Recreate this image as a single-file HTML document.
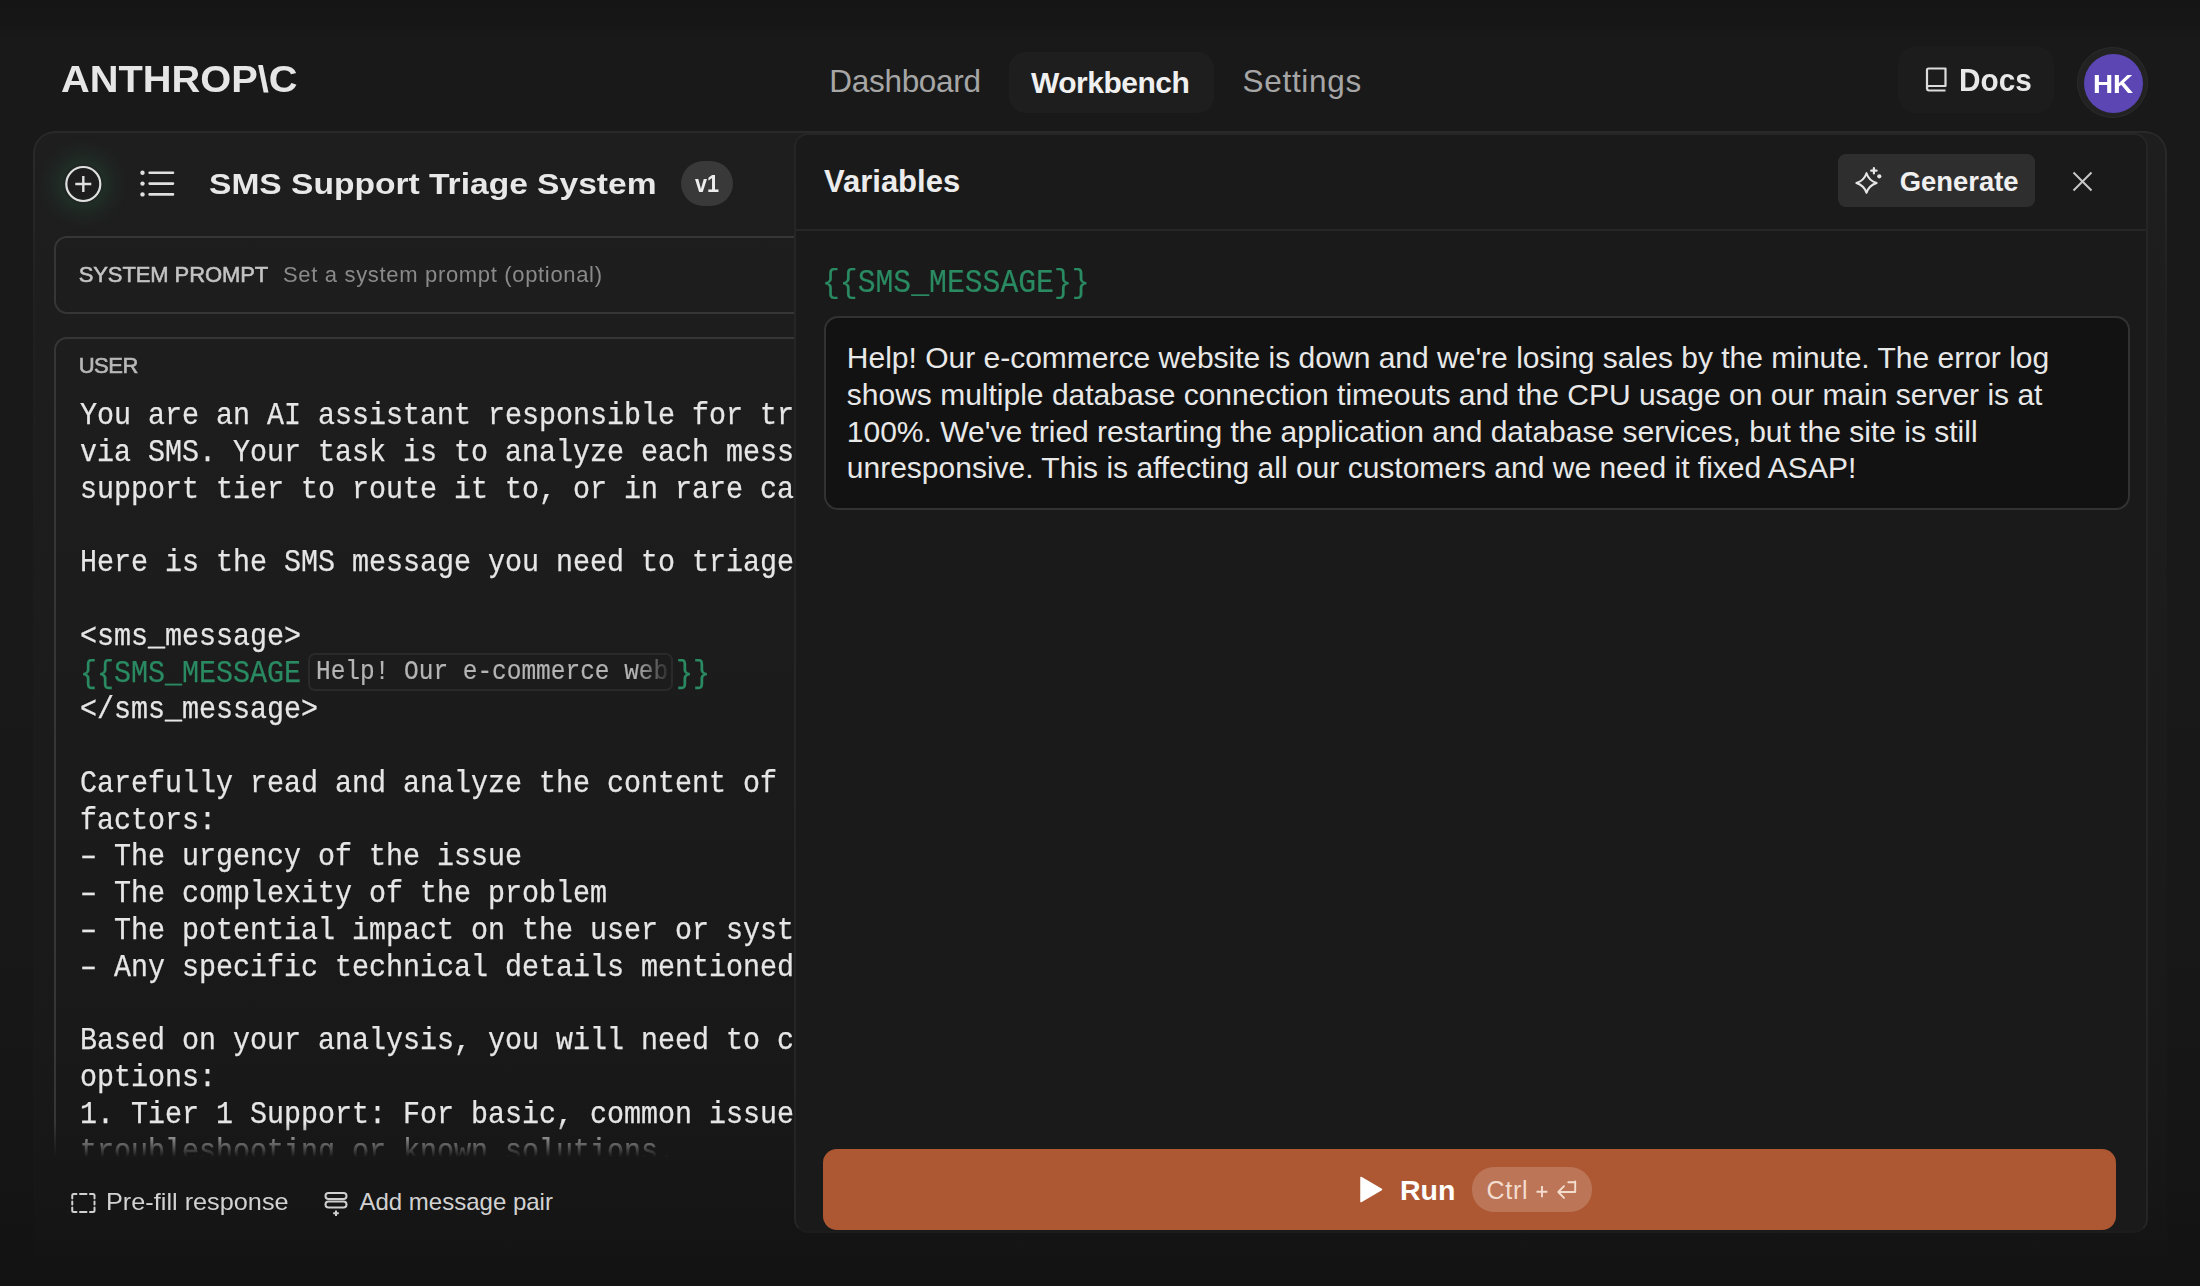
<!DOCTYPE html>
<html><head><meta charset="utf-8">
<style>
html,body{margin:0;padding:0;}
body{width:2200px;height:1286px;overflow:hidden;position:relative;background:#161616;font-family:"Liberation Sans",sans-serif;color:#ececec;}
.a{position:absolute;white-space:pre;line-height:1;}
.b{font-weight:bold;}
.mono{font-family:"Liberation Mono",monospace;}
#bg{position:absolute;left:0;top:0;width:2200px;height:1286px;background:#141414;}
#frame{position:absolute;left:0;top:0;width:2200px;height:1286px;background:linear-gradient(180deg,#151515 0,#161616 20px,#191919 40px,#191919 640px,#171717 1030px,#131313 1260px);}
#outer{position:absolute;left:33px;top:131px;width:2134px;height:1150px;border-radius:22px;background:linear-gradient(180deg,#1e1e1e 0px,#1c1c1c 500px,#191919 900px,rgba(24,24,24,0) 1150px);}
#outerb{position:absolute;left:33px;top:131px;width:2130px;height:1150px;border-radius:22px;border:2px solid #292929;border-bottom:none;-webkit-mask-image:linear-gradient(180deg,#000 0,#000 40px,rgba(0,0,0,0.3) 160px,rgba(0,0,0,0) 450px);}
#left{position:absolute;left:35px;top:133px;width:760px;height:1024px;overflow:hidden;-webkit-mask-image:linear-gradient(180deg,#000 0,#000 990px,rgba(0,0,0,0) 1024px);}
#left .box{position:absolute;border:2px solid #363636;border-radius:13px;}
#vars{position:absolute;left:794px;top:133px;width:1350px;height:1096px;border:2px solid #252525;border-bottom-color:#1c1c1c;border-radius:14px;background:#1a1a1a;}
</style></head>
<body>
<div id="bg"></div><div id="frame"></div>

<!-- top nav -->
<div class="a b" style="left:61px;top:62.2px;font-size:36px;color:#e6e6e6;transform:scaleX(1.105);transform-origin:0 0;">ANTHROP\C</div>

<div style="position:absolute;left:1009px;top:52px;width:205px;height:61px;border-radius:16px;background:#1e1e1e;"></div>
<div class="a" style="left:829.3px;top:66.2px;font-size:31.5px;letter-spacing:-0.3px;color:#a6a6a6;">Dashboard</div>
<div class="a b" style="left:1031px;top:67.9px;font-size:30px;letter-spacing:-0.5px;color:#f0f0f0;">Workbench</div>
<div class="a" style="left:1242.5px;top:66.2px;font-size:31.5px;letter-spacing:0.7px;color:#a6a6a6;">Settings</div>

<div style="position:absolute;left:1898px;top:46px;width:156px;height:67px;border-radius:18px;background:#1c1c1c;"></div>
<svg style="position:absolute;left:1924px;top:66px;" width="26" height="28" viewBox="0 0 26 28">
  <path d="M3 23 V4 Q3 2.5 4.5 2.5 H21.5 V20 H5 Q3 20 3 22 Q3 24.5 5 24.5 H21.5" fill="none" stroke="#dcdcdc" stroke-width="2.2" stroke-linejoin="round"/>
</svg>
<div class="a b" style="left:1959px;top:64.9px;font-size:31px;color:#e8e8e8;transform:scaleX(0.96);transform-origin:0 0;">Docs</div>

<div style="position:absolute;left:2077.4px;top:47.4px;width:71px;height:71px;border-radius:50%;background:#222222;box-shadow:inset 0 0 0 1px #2a2a2a;"></div>
<div style="position:absolute;left:2083.5px;top:53.7px;width:59px;height:59px;border-radius:50%;background:#5b46b4;"></div>
<div class="a b" style="left:2093.3px;top:71px;font-size:26.5px;color:#ffffff;transform:scaleX(1.05);transform-origin:0 0;">HK</div>

<!-- outer panel -->
<div id="outer"></div><div id="outerb"></div>

<!-- left column (clipped) -->
<div id="left">
 <div style="position:absolute;left:0;top:0;width:760px;height:1024px;">
  <div style="position:absolute;left:3.3px;top:6px;width:90px;height:90px;border-radius:50%;background:radial-gradient(circle closest-side,rgba(38,80,60,0) 30%,rgba(38,80,60,0.30) 48%,rgba(38,80,60,0.14) 70%,rgba(38,80,60,0) 100%);"></div>
  <svg style="position:absolute;left:28px;top:31px;" width="40" height="40" viewBox="0 0 40 40">
    <circle cx="20.3" cy="20" r="17" fill="none" stroke="#e0e0e0" stroke-width="2.2"/>
    <path d="M12.3 20 H28.3 M20.3 12 V28" stroke="#e0e0e0" stroke-width="2.4"/>
  </svg>
  <svg style="position:absolute;left:103px;top:33px;" width="40" height="36" viewBox="0 0 40 36">
    <circle cx="4.5" cy="6.7" r="2.2" fill="#e0e0e0"/>
    <circle cx="4.5" cy="17.6" r="2.2" fill="#e0e0e0"/>
    <circle cx="4.5" cy="28.4" r="2.2" fill="#e0e0e0"/>
    <path d="M11.6 6.7 H35 M11.6 17.6 H35 M11.6 28.4 H35" stroke="#e0e0e0" stroke-width="2.6" stroke-linecap="round"/>
  </svg>
  <div class="a b" style="left:173.5px;top:36.9px;font-size:29px;color:#e8e8e8;transform:scaleX(1.157);transform-origin:0 0;">SMS Support Triage System</div>
  <div style="position:absolute;left:646px;top:28px;width:52px;height:45px;border-radius:23px;background:#393939;"></div>
  <div class="a b" style="left:660px;top:38.7px;font-size:24px;color:#ededed;transform:scaleX(0.9);transform-origin:0 0;">v1</div>

  <!-- system prompt box -->
  <div class="box" style="left:19px;top:103px;width:900px;height:74px;"></div>
  <div class="a" style="left:43.7px;top:131.4px;font-size:22px;letter-spacing:-0.1px;color:#c4c4c4;-webkit-text-stroke:0.55px #c4c4c4;">SYSTEM PROMPT</div>
  <div class="a" style="left:248px;top:131.4px;font-size:22px;letter-spacing:0.67px;color:#8a8a8a;">Set a system prompt (optional)</div>

  <!-- user box -->
  <div class="box" style="left:19px;top:204px;width:900px;height:1000px;"></div>
  <div class="a" style="left:43.7px;top:222px;font-size:22px;letter-spacing:-0.5px;color:#b8b8b8;-webkit-text-stroke:0.6px #b8b8b8;">USER</div>

  <div class="mono" style="position:absolute;left:45px;top:265.1px;width:1000px;height:770px;white-space:pre;font-size:32px;line-height:36.78px;color:#e6e6e6;transform:scaleX(0.8854);transform-origin:0 0;-webkit-text-stroke:0.25px #e6e6e6;">You are an AI assistant responsible for triaging customer support
via SMS. Your task is to analyze each message and determine the
support tier to route it to, or in rare cases, escalate directly.

Here is the SMS message you need to triage:

&lt;sms_message&gt;
<span style="color:#2a8a62;-webkit-text-stroke-color:#2a8a62;">{{SMS_MESSAGE</span><span style="display:inline-block;width:423.5px;"></span><span style="color:#2a8a62;-webkit-text-stroke-color:#2a8a62;">}}</span>
&lt;/sms_message&gt;

Carefully read and analyze the content of the SMS message, considering
factors:
– The urgency of the issue
– The complexity of the problem
– The potential impact on the user or system
– Any specific technical details mentioned

Based on your analysis, you will need to categorize the message into
options:
1. Tier 1 Support: For basic, common issues that can be resolved
troubleshooting or known solutions.</div>
  <div style="position:absolute;left:272.6px;top:519.6px;width:361.4px;height:34.6px;border:2px solid #2a2a2a;border-radius:7px;background:#1c1c1c;"></div>
  <div class="a mono" style="left:281.3px;top:525.1px;font-size:28.5px;line-height:28.5px;color:#b4b4b4;transform:scaleX(0.858);transform-origin:0 0;-webkit-text-stroke:0.2px #b4b4b4;-webkit-mask-image:linear-gradient(90deg,#000 0,#000 372px,rgba(0,0,0,0.08) 412px);">Help! Our e-commerce web</div>
 </div>
</div>

<!-- bottom actions -->
<svg style="position:absolute;left:70px;top:1191.5px;" width="28" height="24" viewBox="0 0 28 24">
  <path d="M2.25 6.5 V3.5 Q2.25 2 3.75 2 H6.5 M10 2 H16.5 M20 2 H23 Q24.5 2 24.5 3.5 V6.5 M24.5 9.5 V12.5 M24.5 15.5 V18.5 Q24.5 20 23 20 H20 M16.5 20 H10 M6.5 20 H3.75 Q2.25 20 2.25 18.5 V15.5 M2.25 12.5 V9.5" fill="none" stroke="#d0d0d0" stroke-width="2" stroke-linecap="round"/>
</svg>
<div class="a" style="left:105.6px;top:1189.7px;font-size:24px;color:#d2d2d2;transform:scaleX(1.053);transform-origin:0 0;">Pre-fill response</div>
<svg style="position:absolute;left:323px;top:1190px;" width="28" height="28" viewBox="0 0 28 28">
  <rect x="2.5" y="3" width="21" height="6" rx="3" fill="none" stroke="#d0d0d0" stroke-width="2"/>
  <rect x="2.5" y="11.5" width="21" height="6" rx="3" fill="none" stroke="#d0d0d0" stroke-width="2"/>
  <path d="M13 20.5 V26 M10.2 23.2 H15.8" stroke="#d0d0d0" stroke-width="2"/>
</svg>
<div class="a" style="left:359.5px;top:1189.7px;font-size:24px;color:#d2d2d2;">Add message pair</div>

<!-- variables panel -->
<div id="vars"></div>
<div style="position:absolute;left:796px;top:229px;width:1350px;height:2px;background:#262626;"></div>
<div class="a b" style="left:824px;top:165.8px;font-size:31px;color:#ececec;">Variables</div>

<div style="position:absolute;left:1838px;top:154px;width:197px;height:53px;border-radius:8px;background:#2e2e2e;"></div>
<svg style="position:absolute;left:1852px;top:163px;" width="34" height="34" viewBox="0 0 34 34">
  <path d="M14.5 10.2 Q16.9 17.6 24.6 20 Q16.9 22.4 14.5 29.8 Q12.1 22.4 4.4 20 Q12.1 17.6 14.5 10.2 Z" fill="none" stroke="#e6e6e6" stroke-width="2.1" stroke-linejoin="round"/>
  <path d="M21.9 5 V10.4 M19.2 7.7 H24.6" stroke="#e6e6e6" stroke-width="2.2" stroke-linecap="round"/>
  <circle cx="27.3" cy="13.3" r="2.1" fill="#e6e6e6"/>
</svg>
<div class="a b" style="left:1899.8px;top:167.9px;font-size:27.4px;color:#f0f0f0;">Generate</div>
<svg style="position:absolute;left:2070px;top:169px;" width="26" height="26" viewBox="0 0 26 26">
  <path d="M3.5 3.5 L21.5 21.5 M21.5 3.5 L3.5 21.5" stroke="#c8c8c8" stroke-width="2"/>
</svg>

<div class="a mono" style="left:822.3px;top:266.4px;font-size:34px;color:#2a8a62;transform:scaleX(0.8745);transform-origin:0 0;-webkit-text-stroke:0.2px #2a8a62;">{{SMS_MESSAGE}}</div>

<div style="position:absolute;left:824px;top:316px;width:1302px;height:190px;border:2px solid #323232;border-radius:14px;background:#121212;"></div>
<div style="position:absolute;left:846.8px;top:340px;white-space:pre;font-size:30px;line-height:36.8px;color:#e8e8e8;">Help! Our e-commerce website is down and we're losing sales by the minute. The error log
shows multiple database connection timeouts and the CPU usage on our main server is at
100%. We've tried restarting the application and database services, but the site is still
unresponsive. This is affecting all our customers and we need it fixed ASAP!</div>

<!-- run -->
<div style="position:absolute;left:823px;top:1148.5px;width:1293px;height:81px;border-radius:14px;background:#ae5833;"></div>
<svg style="position:absolute;left:1358px;top:1175px;" width="26" height="30" viewBox="0 0 26 30">
  <path d="M3 2.5 L23.5 14.5 L3 26.5 Z" fill="#ffffff" stroke="#ffffff" stroke-width="1.5" stroke-linejoin="round"/>
</svg>
<div class="a b" style="left:1400px;top:1175.9px;font-size:28.5px;color:#ffffff;">Run</div>
<div style="position:absolute;left:1472px;top:1167px;width:120px;height:44.5px;border-radius:22px;background:rgba(255,255,255,0.18);"></div>
<div class="a" style="left:1486.6px;top:1178.2px;font-size:25px;letter-spacing:0.7px;color:#f4dccf;">Ctrl</div>
<svg style="position:absolute;left:1530px;top:1176.8px;" width="52" height="28" viewBox="0 0 52 28">
  <path d="M6.5 14.7 H17.4 M12 9 V20.3" stroke="#f4dccf" stroke-width="1.9"/>
  <path d="M45.2 5.3 H38.3 M45.2 4.4 V15 H28.5 M34 9.2 L28.3 15 L34 20.8" fill="none" stroke="#f4dccf" stroke-width="1.9" stroke-linejoin="round" stroke-linecap="round"/>
</svg>

</body></html>
